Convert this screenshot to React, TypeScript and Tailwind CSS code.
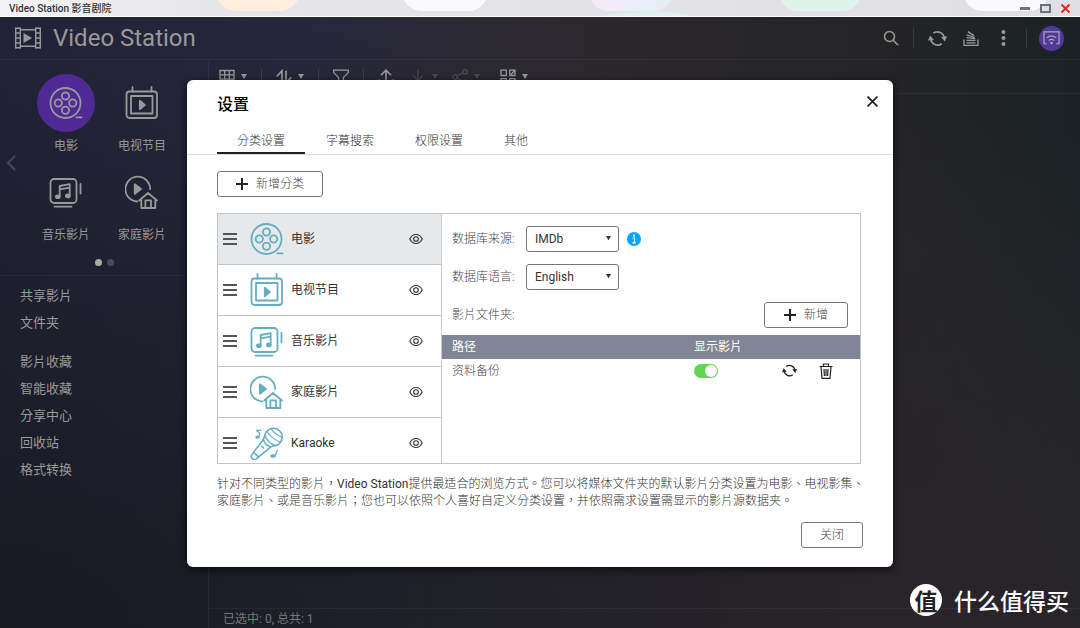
import { useState, type ReactNode } from "react";

type IconProps = { className?: string };

function Glyph({ className = "size-[34px]", children }: IconProps & { children: ReactNode }) {
  return (
    <svg
      viewBox="0 0 34 34"
      className={className}
      fill="none"
      stroke="currentColor"
      strokeWidth="1.8"
      strokeLinecap="round"
      strokeLinejoin="round"
      aria-hidden="true"
    >
      {children}
    </svg>
  );
}

function ReelIcon({ className }: IconProps) {
  return (
    <Glyph className={className}>
      <circle cx="16.5" cy="17" r="15" />
      <circle cx="16.5" cy="10" r="3.6" />
      <circle cx="9.3" cy="17" r="3.6" />
      <circle cx="23.7" cy="17" r="3.6" />
      <circle cx="16.5" cy="24.2" r="3.6" />
      <path d="M27.5 31.4h5" />
    </Glyph>
  );
}

function TvIcon({ className }: IconProps) {
  return (
    <Glyph className={className}>
      <path d="M7.5 1v4.5M26.5 1v4.5" />
      <rect x="1.5" y="5.5" width="30.5" height="26.5" rx="3" />
      <rect x="6" y="10" width="21.5" height="17.5" />
      <path d="M14.8 14.8v8.4l5-4.2z" fill="currentColor" />
    </Glyph>
  );
}

function MusicIcon({ className }: IconProps) {
  return (
    <Glyph className={className}>
      <rect x="1.5" y="4" width="26" height="24" rx="3.5" />
      <path d="M31.5 9v9.5M5.5 31.6h17" />
      <path d="M10.7 21.5V11l10-1.8v11.6M10.7 14.4l10-1.8" />
      <ellipse cx="8.8" cy="21.7" rx="1.9" ry="1.4" fill="currentColor" />
      <ellipse cx="18.8" cy="20.9" rx="1.9" ry="1.4" fill="currentColor" />
    </Glyph>
  );
}

function HomeVideoIcon({ className }: IconProps) {
  return (
    <Glyph className={className}>
      <path d="M25.2 14A12.4 12.4 0 1 0 12.4 26.5" />
      <path d="M9.8 9.2v9.6l6.2-4.8z" fill="currentColor" />
      <path d="M14.2 25.5 23 18l9 7.5M16.3 24.5V33h14v-8.5M20.4 32.5v-7.2h5.6v7.2" />
    </Glyph>
  );
}

function MicIcon({ className }: IconProps) {
  return (
    <Glyph className={className}>
      <path d="M14.8 9.2a8.8 8.8 0 1 1 10.6 10.4l-4.6 1.2Q14.6 19.4 13.4 13.4z" strokeWidth="1.6" />
      <path d="M14.8 9.2Q17.6 16.8 25.4 19.6" strokeWidth="1.3" />
      <path d="M13.4 13.4 2 28.4a3.1 3.1 0 0 0 4.3 4.4L20.8 20.8M3.8 26.4l4.6 4.4M11.6 20.4l2 1.6" strokeWidth="1.6" />
      <path d="M16.8 5q4.4 7.6 13.4 11M20.8 2.6q4 5.6 10.8 8.4" strokeWidth="1.1" />
      <path d="M9 10.6 9.6 7 6.4 4.4h4.4" strokeWidth="1.3" />
      <path d="M25.4 29.6l1.8-5.4" strokeWidth="1.3" />
      <ellipse cx="7.4" cy="11.2" rx="1.7" ry="1.1" fill="currentColor" strokeWidth="1" />
      <ellipse cx="23" cy="30" rx="2.4" ry="1.3" fill="currentColor" strokeWidth="1" />
    </Glyph>
  );
}

function Small({ className = "size-4", children }: IconProps & { children: ReactNode }) {
  return (
    <svg viewBox="0 0 16 16" className={className} fill="none" stroke="currentColor" strokeWidth="1.3" aria-hidden="true">
      {children}
    </svg>
  );
}

function RefreshIcon({ className }: IconProps) {
  return (
    <svg viewBox="0 0 18 16" className={className} fill="none" stroke="currentColor" strokeWidth="1.6" aria-hidden="true">
      <path d="M5 3A6.6 6.6 0 0 1 15.4 7.6M13 13A6.6 6.6 0 0 1 2.6 8.4" />
      <path d="M12.4 6.6 18 6l-2 4.8zM5.6 9.4 0 10l2-4.8z" fill="currentColor" stroke="none" />
    </svg>
  );
}

function Caret({ className = "w-[6px]" }: IconProps) {
  return (
    <svg viewBox="0 0 6 5" className={className} fill="currentColor" aria-hidden="true">
      <path d="M0 0h6L3 5z" />
    </svg>
  );
}

function PlusIcon() {
  return (
    <svg viewBox="0 0 12 12" className="size-3" fill="none" stroke="#222" strokeWidth="2" aria-hidden="true">
      <path d="M6 0v12M0 6h12" />
    </svg>
  );
}

function EyeIcon() {
  return (
    <svg viewBox="0 0 14 12" className="w-[14px]" fill="none" stroke="#333" strokeWidth="1.1" aria-hidden="true">
      <path d="M.8 6c2.8-6 9.6-6 12.4 0-2.8 6-9.6 6-12.4 0z" />
      <circle cx="7" cy="6" r="2.3" />
    </svg>
  );
}

const library = [
  { name: "电影", Icon: ReelIcon },
  { name: "电视节目", Icon: TvIcon },
  { name: "音乐影片", Icon: MusicIcon },
  { name: "家庭影片", Icon: HomeVideoIcon },
];

const categories = [...library, { name: "Karaoke", Icon: MicIcon }];

const linkGroups = [
  ["共享影片", "文件夹"],
  ["影片收藏", "智能收藏", "分享中心", "回收站", "格式转换"],
];

const tabs = ["分类设置", "字幕搜索", "权限设置", "其他"];

function TitleBar() {
  return (
    <div className="relative flex h-[17px] shrink-0 items-center justify-between overflow-hidden border-b border-white bg-gradient-to-r from-[#f4f4f7] via-[#e6e5ea] via-20% to-[#e0dfe3] pr-[10px] pl-[9px]">
      <div className="absolute -top-8 left-[20%] h-[43px] w-[84px] rounded-[20px] bg-[#ffeedd]" />
      <div className="absolute -top-8 left-[37.2%] h-[43px] w-[86px] rounded-[20px] bg-[#fafafc]" />
      <div className="absolute -top-8 left-[54.5%] h-[43px] w-[84px] rounded-[20px] bg-gradient-to-r from-[#f5eaf7] to-[#e2f0f5]" />
      <div className="absolute top-[11px] left-[54%] h-10 w-[130px] rounded-[50%] bg-[#e0eeee]" />
      <div className="absolute -top-8 left-[72%] h-[43px] w-[84px] rounded-[20px] bg-[#e0f3ea]" />
      <div className="absolute -top-8 left-[89.2%] h-[43px] w-[86px] rounded-[20px] bg-[#fafafc]" />
      <span className="relative text-[10px] font-medium text-[#333]">Video Station 影音剧院</span>
      <div className="relative flex items-center gap-[10px]">
        <button aria-label="最小化" className="h-[3px] w-[10px] bg-[#6c7380]" />
        <button aria-label="最大化" className="h-[9px] w-[11px] border-2 border-[#6c7380]" />
        <button aria-label="关闭窗口" className="text-[#e8262b]">
          <svg viewBox="0 0 9 9" className="size-[9px]" stroke="currentColor" strokeWidth="2">
            <path d="M.5.5l8 8M8.5.5l-8 8" />
          </svg>
        </button>
      </div>
    </div>
  );
}

function Header() {
  return (
    <header className="flex h-[43px] shrink-0 items-center border-b border-white/5 pr-4 pl-[15px] text-[#999]">
      <svg viewBox="0 0 26 22" className="w-[26px]" fill="none" stroke="currentColor" strokeWidth="1.4" aria-hidden="true">
        <path d="M.7.5v21M5.3.5v21M20.7.5v21M25.3.5v21M5.3 2.7h15.4M5.3 19.3h15.4" />
        <path d="M.7 1.2h4.6M.7 6h4.6M.7 11h4.6M.7 16h4.6M.7 20.8h4.6M20.7 1.2h4.6M20.7 6h4.6M20.7 11h4.6M20.7 16h4.6M20.7 20.8h4.6" />
        <path d="M8.5 6v10l8.5-5z" fill="currentColor" stroke="none" />
      </svg>
      <h1 className="ml-3 text-2xl">Video Station</h1>
      <div className="ml-auto flex items-center">
        <button aria-label="搜索">
          <Small>
            <circle cx="6.5" cy="6.5" r="5" strokeWidth="1.6" />
            <path d="M10.2 10.2l5 5" strokeWidth="1.6" />
          </Small>
        </button>
        <span className="mx-[14px] h-5 w-px bg-white/10" />
        <button aria-label="刷新">
          <RefreshIcon className="w-[19px]" />
        </button>
        <button aria-label="后台任务" className="ml-4">
          <Small>
            <path d="M1 9.5v5.8h14V9.5M3.5 12.8h9M3.5 10.4h9M3.4 7.6l8.9 1.1M3.6 4.9l8 2.5M4.8 1.6l6.2 4" />
          </Small>
        </button>
        <button aria-label="更多" className="ml-[22px]">
          <svg viewBox="0 0 5 16" className="h-4" fill="currentColor">
            <circle cx="2.5" cy="2" r="2" />
            <circle cx="2.5" cy="8" r="2" />
            <circle cx="2.5" cy="14" r="2" />
          </svg>
        </button>
        <span className="mr-3 ml-5 h-5 w-px bg-white/10" />
        <button aria-label="投放" className="flex size-[25px] items-center justify-center rounded-full bg-[#52389a]">
          <svg viewBox="0 0 18 15" className="w-[17px]" fill="none" stroke="#aaa" strokeWidth="1.3">
            <path d="M4 13.5H1V1h16v12.5h-3M4 7.3c3-2.6 7-2.6 10 0M6 10c2-1.6 4-1.6 6 0" />
            <circle cx="9" cy="12.8" r="1.3" fill="#aaa" stroke="none" />
          </svg>
        </button>
      </div>
    </header>
  );
}

function Sidebar() {
  return (
    <aside className="flex w-[209px] shrink-0 flex-col border-r border-white/5 text-[#999]">
      <div className="flex items-center border-b border-white/5 pb-[9px]">
        <button aria-label="上一页" className="ml-[6px] w-[22px] text-[#46475a]">
          <svg viewBox="0 0 10 16" className="w-[10px]" fill="none" stroke="currentColor" strokeWidth="2">
            <path d="M9 1L2 8l7 7" />
          </svg>
        </button>
        <div className="pt-[14px]">
          <div className="grid grid-cols-2 gap-y-2">
            {library.map(({ name, Icon }, i) => (
              <a key={name} href="#" className="flex w-[76px] flex-col items-center gap-[5px]">
                <span className={`flex size-[58px] items-center justify-center rounded-full ${i === 0 ? "bg-[#4f2a94]" : ""}`}>
                  <Icon className="size-[34px]" />
                </span>
                <span className="text-xs leading-[18px]">{name}</span>
              </a>
            ))}
          </div>
          <div className="mt-[15px] flex justify-center gap-[5px]">
            <span className="size-[7px] rounded-full bg-[#aaa]" />
            <span className="size-[7px] rounded-full bg-[#4a4a55]" />
          </div>
        </div>
      </div>
      <nav className="flex flex-col gap-3 pt-[6px] pl-5 text-[13px] leading-[27px]">
        {linkGroups.map((group) => (
          <ul key={group[0]}>
            {group.map((item) => (
              <li key={item}>
                <a href="#">{item}</a>
              </li>
            ))}
          </ul>
        ))}
      </nav>
    </aside>
  );
}

function Toolbar() {
  const line = <span className="h-4 w-px bg-white/10" />;
  return (
    <div className="flex h-[34px] shrink-0 items-center gap-[14px] border-b border-white/5 pl-[10px] text-[#999]">
      <button aria-label="视图" className="flex items-center gap-[6px]">
        <Small>
          <path d="M1 1.5h14v13H1zM1 5.8h14M1 10.2h14M5.7 1.5v13M10.3 1.5v13" />
        </Small>
        <Caret />
      </button>
      {line}
      <button aria-label="排序" className="flex items-center gap-[6px]">
        <Small>
          <path d="M.8 7.5 6 1.8V14M10 1.8V14l5.2-5.7" strokeWidth="1.7" />
        </Small>
        <Caret />
      </button>
      {line}
      <button aria-label="筛选">
        <Small>
          <path d="M.7 1.2h14.6v2.4L10.4 8.5V15H5.6V8.5L.7 3.6z" />
        </Small>
      </button>
      {line}
      <button aria-label="上传">
        <Small>
          <path d="M8 12V1.2M3 6.2l5-5 5 5M1 10.5v4h14v-4" strokeWidth="1.6" />
        </Small>
      </button>
      <button aria-label="下载" className="ml-[2px] flex items-center gap-[6px] opacity-30" disabled>
        <Small>
          <path d="M8 1v10.5M3.5 7L8 11.5 12.5 7M1 10.5v4h14v-4" />
        </Small>
        <Caret />
      </button>
      <button aria-label="分享" className="flex items-center gap-[6px] opacity-30" disabled>
        <Small>
          <circle cx="3" cy="8" r="2.3" />
          <circle cx="13" cy="2.8" r="2.3" />
          <circle cx="13" cy="13.2" r="2.3" />
          <path d="M5 7l6-3.2M5 9l6 3.2" />
        </Small>
        <Caret />
      </button>
      <button aria-label="多选" className="ml-[6px] flex items-center gap-[6px]">
        <Small>
          <path d="M1 1.2h5.3v5.3H1zM9.7 1.2H15v5.3H9.7zM1 9.7h5.3V15H1zM9.7 9.7H15V15H9.7zM11 5.5l4-4.3" />
        </Small>
        <Caret />
      </button>
    </div>
  );
}

function SelectBox({ id, options }: { id: string; options: string[] }) {
  return (
    <span className="relative inline-flex w-[93px] items-center">
      <select id={id} className="h-[26px] w-full appearance-none rounded-[3px] border border-[#777] bg-white pt-px pl-2 text-xs font-normal text-[#333]">
        {options.map((o) => (
          <option key={o}>{o}</option>
        ))}
      </select>
      <Caret className="pointer-events-none absolute right-2 w-[5px] text-[#333]" />
    </span>
  );
}

function CategoryList() {
  const [active, setActive] = useState(0);
  return (
    <ul className="h-[249px] w-[224px] shrink-0 overflow-hidden border-r border-[#ccc]">
      {categories.map(({ name, Icon }, i) => (
        <li
          key={name}
          onClick={() => setActive(i)}
          className={`flex h-[51px] items-center border-b border-[#c4c4c4] pl-[5px] ${i === active ? "bg-[#e6e9ec]" : "bg-white"}`}
        >
          <svg viewBox="0 0 14 12" className="w-[14px]" stroke="#555" strokeWidth="2" aria-hidden="true">
            <path d="M0 1h14M0 6h14M0 11h14" />
          </svg>
          <span className="mr-[7px] ml-[13px] text-[#66adc1]">
            <Icon />
          </span>
          <span className="text-xs font-normal text-[#333]">{name}</span>
          <button aria-label={`显示${name}`} className="mr-[18px] ml-auto">
            <EyeIcon />
          </button>
        </li>
      ))}
    </ul>
  );
}

function CategoryDetail() {
  return (
    <div className="min-w-0 grow text-xs text-[#444]">
      <div className="flex flex-col gap-3 pt-3 pl-[10px]">
        <div className="flex items-center">
          <label htmlFor="source" className="w-[74px]">数据库来源:</label>
          <SelectBox id="source" options={["IMDb", "Douban"]} />
          <svg viewBox="0 0 14 14" className="ml-2 size-[14px]" role="img" aria-label="说明">
            <circle cx="7" cy="7" r="7" fill="#00a6fb" />
            <circle cx="7" cy="3.6" r="1.1" fill="#fff" />
            <path d="M5.7 6H7.5v4.8M5.5 10.8h3.4" stroke="#fff" strokeWidth="1.2" fill="none" />
          </svg>
        </div>
        <div className="flex items-center">
          <label htmlFor="language" className="w-[74px]">数据库语言:</label>
          <SelectBox id="language" options={["English", "中文"]} />
        </div>
        <div className="flex items-center justify-between pr-3">
          <span>影片文件夹:</span>
          <button className="flex h-[26px] w-[84px] items-center justify-center gap-2 rounded-[3px] border border-[#777]">
            <PlusIcon />
            新增
          </button>
        </div>
      </div>
      <table className="mt-[7px] w-full table-fixed text-left">
        <thead>
          <tr className="h-6 bg-[#808695] text-white">
            <th className="pl-[10px] font-normal">路径</th>
            <th className="w-[88px] font-normal">显示影片</th>
            <th className="w-[78px]" />
          </tr>
        </thead>
        <tbody>
          <tr className="h-6">
            <td className="pl-[10px]">资料备份</td>
            <td>
              <label className="relative block h-[14px] w-6">
                <input type="checkbox" defaultChecked aria-label="显示影片" className="peer absolute inset-0 size-full appearance-none rounded-full bg-gray-300 checked:bg-[#63d456]" />
                <span className="pointer-events-none absolute top-px left-px size-3 rounded-full bg-white peer-checked:left-[11px]" />
              </label>
            </td>
            <td>
              <div className="flex items-center gap-[22px] text-[#222]">
                <button aria-label="重新扫描">
                  <RefreshIcon className="w-[15px]" />
                </button>
                <button aria-label="删除">
                  <svg viewBox="0 0 14 16" className="h-4" fill="none" stroke="currentColor" strokeWidth="1.2">
                    <path d="M.5 3.5h13M4.5 3.2V1h5v2.2M2 3.8l1 11.5h8l1-11.5M5 6l.4 7M7 6v7M9 6l-.4 7" />
                  </svg>
                </button>
              </div>
            </td>
          </tr>
        </tbody>
      </table>
    </div>
  );
}

function SettingsDialog() {
  const [tab, setTab] = useState(tabs[0]);
  return (
    <div role="dialog" aria-labelledby="settings-title" className="w-full max-w-[706px] rounded-md bg-white pb-[19px] font-light shadow-[0_2px_8px_rgba(0,0,0,0.7)]">
      <div className="flex items-start justify-between pt-[13px] pr-[15px] pl-[30px]">
        <h2 id="settings-title" className="text-base font-medium text-black">设置</h2>
        <button aria-label="关闭设置" className="mt-[3px]">
          <svg viewBox="0 0 11 11" className="size-[11px]" stroke="#222" strokeWidth="1.7">
            <path d="M.5.5l10 10M10.5.5l-10 10" />
          </svg>
        </button>
      </div>
      <div role="tablist" className="mt-[7px] flex gap-px border-b border-[#ddd] pl-[30px]">
        {tabs.map((t) => (
          <button
            key={t}
            role="tab"
            aria-selected={t === tab}
            onClick={() => setTab(t)}
            className={`h-[30px] border-b-2 px-5 pt-[6px] text-xs text-[#333] ${t === tab ? "border-[#222]" : "border-transparent"}`}
          >
            {t}
          </button>
        ))}
      </div>
      <div className="px-[30px] pt-4">
        <button className="flex h-[26px] items-center gap-2 rounded-[3px] border border-[#777] px-[18px] text-xs text-[#444]">
          <PlusIcon />
          新增分类
        </button>
        <div className="mt-4 mr-[2px] flex border border-[#c4c4c4]">
          <CategoryList />
          <CategoryDetail />
        </div>
        <p className="mt-3 text-xs leading-[17px] whitespace-nowrap text-[#333]">
          针对不同类型的影片，<span className="font-normal">Video Station</span>提供最适合的浏览方式。您可以将媒体文件夹的默认影片分类设置为电影、电视影集、
          <br />
          家庭影片、或是音乐影片；您也可以依照个人喜好自定义分类设置，并依照需求设置需显示的影片源数据夹。
        </p>
        <div className="mt-3 flex justify-end">
          <button className="h-[26px] w-[62px] rounded-[3px] border border-[#777] text-xs text-[#444]">关闭</button>
        </div>
      </div>
    </div>
  );
}

export default function App() {
  return (
    <div className="flex h-screen flex-col overflow-hidden font-['Roboto','Noto_Sans_CJK_TC',sans-serif]">
      <TitleBar />
      <div className="relative flex min-h-0 grow flex-col bg-[radial-gradient(ellipse_at_0%_100%,#181b22_0%,#191b2300_75%),radial-gradient(ellipse_at_80%_100%,#2d272c_0%,#2d272c00_60%),linear-gradient(to_right,#222339_0%,#28283d_28%,#2c2930_48%,#252426_80%,#1b2225_100%)]">
        <Header />
        <div className="flex min-h-0 grow">
          <Sidebar />
          <main className="flex min-w-0 grow flex-col">
            <Toolbar />
            <div className="grow" />
            <footer className="h-5 border-t border-white/5 pl-[14px] text-xs leading-5 text-[#777]">已选中: 0, 总共: 1</footer>
          </main>
        </div>
        <div className="absolute inset-0 flex items-center justify-center pt-px">
          <SettingsDialog />
        </div>
        <div className="absolute right-[11px] bottom-[11px] flex items-center gap-3 font-['Noto_Sans_CJK_SC',sans-serif] text-white">
          <span className="flex size-8 items-center justify-center rounded-full bg-white text-[23px] leading-8 font-bold text-[#222]">值</span>
          <span className="text-[23px] font-medium">什么值得买</span>
        </div>
      </div>
    </div>
  );
}
